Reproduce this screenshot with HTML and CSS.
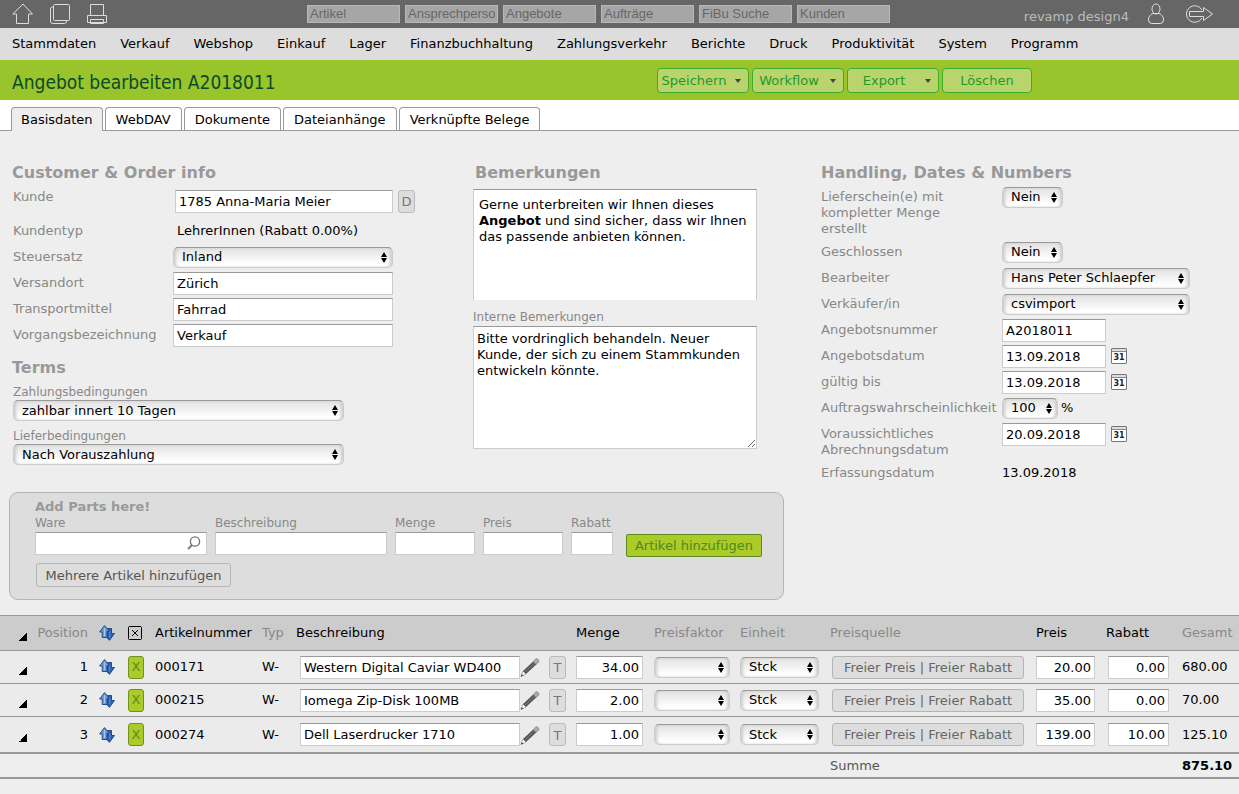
FILE: index.html
```html
<!DOCTYPE html>
<html lang="de">
<head>
<meta charset="utf-8">
<title>Angebot bearbeiten A2018011</title>
<link rel="stylesheet" href="styles.css">
</head>
<body>
<svg class="sprite" aria-hidden="true">
  <symbol id="move" viewBox="0 0 16 16">
    <path d="M8.500 3.500H12.500V8.500H15.500L10.500 15.300 5.500 10.500H8.500Z" fill="#2f62b5" stroke="#173f85" stroke-width=".9"/>
    <path d="M5.500 .6 10.500 6.500H8V12.500H3.200V7H.6Z" fill="#6b9cd2" stroke="#173f85" stroke-width=".9"/>
    <path d="M5.500 3V11" stroke="#a5c8ec" stroke-width="1"/>
    <path d="M10.800 6V12.500" stroke="#5b8bd2" stroke-width="1"/>
  </symbol>
  <symbol id="pencil" viewBox="0 0 20 20">
    <path d="M1 19.500 3 14 6 17Z" fill="#fff" stroke="#999" stroke-width=".8"/>
    <path d="M1 19.500 1.800 17.200 3.200 18.600Z" fill="#222"/>
    <path d="M3 14 13.200 4.400 16.200 7.400 6 17Z" fill="#555"/>
    <path d="M4.800 15.200 14.500 6" stroke="#888" stroke-width=".8"/>
    <path d="M13.200 4.400 15.600 2Q17 1.300 18.200 2.500T18.600 5.200L16.200 7.400Z" fill="#aaa" stroke="#777" stroke-width=".6"/>
  </symbol>
</svg>

<header class="topbar">
  <div class="tools">
    <a href="#" aria-label="Startseite"><svg width="22" height="22" viewBox="0 0 22 22"><path d="M11 1 20.500 11H16.500V20.500H4.500V11H.8Z"/></svg></a>
    <a href="#" aria-label="Kopieren"><svg width="22" height="22" viewBox="0 0 22 22"><rect x="4.500" y="1.500" width="16" height="16" rx="1"/><path d="M4 4H3.500Q1.500 4 1.500 6V18Q1.500 20.500 4 20.500H15.500Q17.500 20.500 17.500 18"/></svg></a>
    <a href="#" aria-label="Drucken"><svg width="22" height="22" viewBox="0 0 22 22"><path d="M4.500 12V1.500H17.500V12M1.500 12.500H20.500V19.500H1.500ZM4.500 19V16.500H17.500V20.500H4.500Z"/></svg></a>
  </div>
  <form class="quick">
    <input type="text" aria-label="Artikel" placeholder="Artikel">
    <input type="text" aria-label="Ansprechperson" placeholder="Ansprechperson">
    <input type="text" aria-label="Angebote" placeholder="Angebote">
    <input type="text" aria-label="Aufträge" placeholder="Aufträge">
    <input type="text" aria-label="FiBu Suche" placeholder="FiBu Suche">
    <input type="text" aria-label="Kunden" placeholder="Kunden">
  </form>
  <div class="account">
    <span class="account-name">revamp design4</span>
    <a href="#" aria-label="Benutzer"><svg width="20" height="22" viewBox="0 0 20 22"><ellipse cx="10" cy="6" rx="4" ry="5"/><path d="M7 10.500H13Q17.500 12 17.500 17 17.500 20.500 14 20.500H6Q2.500 20.500 2.500 17 2.500 12 7 10.500Z"/></svg></a>
    <a href="#" aria-label="Abmelden"><svg width="32" height="20" viewBox="0 0 32 20"><path d="M19 6A8.300 8.300 0 1 0 19 14M6.500 7.500H20.500V3.500L29.500 10 20.500 16.500V12.500H6.500Z"/></svg></a>
  </div>
</header>

<nav class="menu">
  <a href="#">Stammdaten</a><a href="#">Verkauf</a><a href="#">Webshop</a><a href="#">Einkauf</a><a href="#">Lager</a><a href="#">Finanzbuchhaltung</a><a href="#">Zahlungsverkehr</a><a href="#">Berichte</a><a href="#">Druck</a><a href="#">Produktivität</a><a href="#">System</a><a href="#">Programm</a>
</nav>

<div class="titlebar">
  <h1>Angebot bearbeiten A2018011</h1>
  <div class="actions">
    <button type="button" class="action"><span>Speichern</span><i class="caret"></i></button>
    <button type="button" class="action"><span>Workflow</span><i class="caret"></i></button>
    <button type="button" class="action"><span>Export</span><i class="caret"></i></button>
    <button type="button" class="action action-plain"><span>Löschen</span></button>
  </div>
</div>

<nav class="tabs">
  <a href="#" class="tab tab-active" aria-current="page">Basisdaten</a>
  <a href="#" class="tab">WebDAV</a>
  <a href="#" class="tab">Dokumente</a>
  <a href="#" class="tab">Dateianhänge</a>
  <a href="#" class="tab">Verknüpfte Belege</a>
</nav>

<main>
  <div class="columns">
    <section class="customer">
      <h2>Customer &amp; Order info</h2>
      <div class="row"><label for="kunde">Kunde</label><div class="field field-lookup"><input id="kunde" type="text" value="1785 Anna-Maria Meier"><button type="button" class="mini">D</button></div></div>
      <div class="row"><span class="label">Kundentyp</span><div class="field field-text">LehrerInnen (Rabatt 0.00%)</div></div>
      <div class="row"><label for="steuer">Steuersatz</label><div class="field"><span class="select w-wide"><select id="steuer"><option>Inland</option></select></span></div></div>
      <div class="row"><label for="ort">Versandort</label><div class="field"><input id="ort" class="w-wide" type="text" value="Zürich"></div></div>
      <div class="row"><label for="transport">Transportmittel</label><div class="field"><input id="transport" class="w-wide" type="text" value="Fahrrad"></div></div>
      <div class="row"><label for="vorgang">Vorgangsbezeichnung</label><div class="field"><input id="vorgang" class="w-wide" type="text" value="Verkauf"></div></div>
      <h2 class="terms-title">Terms</h2>
      <div class="stack"><label for="zahlung">Zahlungsbedingungen</label><span class="select"><select id="zahlung"><option>zahlbar innert 10 Tagen</option></select></span></div>
      <div class="stack"><label for="liefer">Lieferbedingungen</label><span class="select"><select id="liefer"><option>Nach Vorauszahlung</option></select></span></div>
    </section>

    <section class="notes">
      <h2 id="bem">Bemerkungen</h2>
      <div class="editor" contenteditable="true" role="textbox" aria-multiline="true" aria-labelledby="bem">Gerne unterbreiten wir Ihnen dieses<br><b>Angebot</b> und sind sicher, dass wir Ihnen<br>das passende anbieten können.</div>
      <label for="intern">Interne Bemerkungen</label>
      <textarea id="intern">Bitte vordringlich behandeln. Neuer
Kunde, der sich zu einem Stammkunden
entwickeln könnte.</textarea>
    </section>

    <section class="handling">
      <h2>Handling, Dates &amp; Numbers</h2>
      <div class="row"><label for="ls">Lieferschein(e) mit<br>kompletter Menge<br>erstellt</label><div class="field"><span class="select w-short"><select id="ls"><option>Nein</option></select></span></div></div>
      <div class="row"><label for="zu">Geschlossen</label><div class="field"><span class="select w-short"><select id="zu"><option>Nein</option></select></span></div></div>
      <div class="row"><label for="bearb">Bearbeiter</label><div class="field"><span class="select w-person"><select id="bearb"><option>Hans Peter Schlaepfer</option></select></span></div></div>
      <div class="row"><label for="verk">Verkäufer/in</label><div class="field"><span class="select w-person"><select id="verk"><option>csvimport</option></select></span></div></div>
      <div class="row"><label for="nr">Angebotsnummer</label><div class="field"><input id="nr" class="w-date" type="text" value="A2018011"></div></div>
      <div class="row"><label for="dat">Angebotsdatum</label><div class="field"><input id="dat" class="w-date" type="text" value="13.09.2018"><button type="button" class="calendar">31</button></div></div>
      <div class="row"><label for="bis">gültig bis</label><div class="field"><input id="bis" class="w-date" type="text" value="13.09.2018"><button type="button" class="calendar">31</button></div></div>
      <div class="row"><label for="wahr">Auftragswahrscheinlichkeit</label><div class="field"><span class="select w-percent"><select id="wahr"><option>100</option></select></span><span class="unit">%</span></div></div>
      <div class="row"><label for="abr">Voraussichtliches Abrechnungsdatum</label><div class="field"><input id="abr" class="w-date" type="text" value="20.09.2018"><button type="button" class="calendar">31</button></div></div>
      <div class="row"><span class="label">Erfassungsdatum</span><div class="field">13.09.2018</div></div>
    </section>
  </div>

  <form class="parts">
    <h3>Add Parts here!</h3>
    <div class="parts-fields">
      <div class="part part-long"><label for="p1">Ware</label><div class="search"><input id="p1" type="text"><svg class="lens" width="14" height="14" viewBox="0 0 14 14"><circle cx="8" cy="5.500" r="4.600" fill="none" stroke="#777" stroke-width="1.400"/><path d="M5 9 1 13" stroke="#777" stroke-width="1.800"/></svg></div></div>
      <div class="part part-long"><label for="p2">Beschreibung</label><input id="p2" type="text"></div>
      <div class="part part-mid"><label for="p3">Menge</label><input id="p3" type="text"></div>
      <div class="part part-mid"><label for="p4">Preis</label><input id="p4" type="text"></div>
      <div class="part part-small"><label for="p5">Rabatt</label><input id="p5" type="text"></div>
      <button type="button" class="add">Artikel hinzufügen</button>
    </div>
    <button type="button" class="more">Mehrere Artikel hinzufügen</button>
  </form>

  <table class="items">
    <colgroup><col class="c-flag"><col class="c-pos"><col class="c-move"><col class="c-del"><col class="c-num"><col class="c-type"><col><col class="c-qty"><col class="c-factor"><col class="c-unit"><col class="c-source"><col class="c-price"><col class="c-disc"><col class="c-total"></colgroup>
    <thead>
      <tr><th><i class="corner"></i></th><th class="soft right">Position</th><th class="center"><svg class="move" width="16" height="16"><use href="#move"/></svg></th><th class="del"><svg class="xbox" width="14" height="14" viewBox="0 0 14 14"><rect x=".5" y=".5" width="13" height="13" rx="1" fill="none" stroke="#000"/><path d="M4 4 10 10M10 4 4 10" stroke="#000"/></svg></th><th>Artikelnummer</th><th class="soft">Typ</th><th>Beschreibung</th><th>Menge</th><th class="soft">Preisfaktor</th><th class="soft">Einheit</th><th class="soft">Preisquelle</th><th>Preis</th><th>Rabatt</th><th class="soft">Gesamt</th></tr>
    </thead>
    <tbody>
      <tr><td><i class="corner"></i></td><td class="right">1</td><td class="center"><svg class="move" width="16" height="16"><use href="#move"/></svg></td><td class="del"><button type="button" class="remove">X</button></td><td>000171</td><td>W-</td><td><div class="desc"><input type="text" aria-label="Beschreibung 1" value="Western Digital Caviar WD400"><svg width="20" height="20"><use href="#pencil"/></svg><button type="button" class="mini">T</button></div></td><td><input class="num w-qty" type="text" aria-label="Menge 1" value="34.00"></td><td><span class="select w-factor"><select aria-label="Preisfaktor 1"><option></option></select></span></td><td><span class="select w-unit"><select aria-label="Einheit 1"><option>Stck</option></select></span></td><td><button type="button" class="source">Freier Preis | Freier Rabatt</button></td><td><input class="num w-price" type="text" aria-label="Preis 1" value="20.00"></td><td class="disc"><input class="num w-disc" type="text" aria-label="Rabatt 1" value="0.00"></td><td>680.00</td></tr>
      <tr><td><i class="corner"></i></td><td class="right">2</td><td class="center"><svg class="move" width="16" height="16"><use href="#move"/></svg></td><td class="del"><button type="button" class="remove">X</button></td><td>000215</td><td>W-</td><td><div class="desc"><input type="text" aria-label="Beschreibung 2" value="Iomega Zip-Disk 100MB"><svg width="20" height="20"><use href="#pencil"/></svg><button type="button" class="mini">T</button></div></td><td><input class="num w-qty" type="text" aria-label="Menge 2" value="2.00"></td><td><span class="select w-factor"><select aria-label="Preisfaktor 2"><option></option></select></span></td><td><span class="select w-unit"><select aria-label="Einheit 2"><option>Stck</option></select></span></td><td><button type="button" class="source">Freier Preis | Freier Rabatt</button></td><td><input class="num w-price" type="text" aria-label="Preis 2" value="35.00"></td><td class="disc"><input class="num w-disc" type="text" aria-label="Rabatt 2" value="0.00"></td><td>70.00</td></tr>
      <tr><td><i class="corner"></i></td><td class="right">3</td><td class="center"><svg class="move" width="16" height="16"><use href="#move"/></svg></td><td class="del"><button type="button" class="remove">X</button></td><td>000274</td><td>W-</td><td><div class="desc"><input type="text" aria-label="Beschreibung 3" value="Dell Laserdrucker 1710"><svg width="20" height="20"><use href="#pencil"/></svg><button type="button" class="mini">T</button></div></td><td><input class="num w-qty" type="text" aria-label="Menge 3" value="1.00"></td><td><span class="select w-factor"><select aria-label="Preisfaktor 3"><option></option></select></span></td><td><span class="select w-unit"><select aria-label="Einheit 3"><option>Stck</option></select></span></td><td><button type="button" class="source">Freier Preis | Freier Rabatt</button></td><td><input class="num w-price" type="text" aria-label="Preis 3" value="139.00"></td><td class="disc"><input class="num w-disc" type="text" aria-label="Rabatt 3" value="10.00"></td><td>125.10</td></tr>
    </tbody>
    <tfoot>
      <tr><td colspan="10"></td><td class="sum-label">Summe</td><td colspan="2"></td><td class="sum">875.10</td></tr>
    </tfoot>
  </table>
</main>
</body>
</html>
```
FILE: styles.css
```css
* { box-sizing: border-box; }
body {
  margin: 0;
  background: #eee;
  color: #000;
  font: 13px/16px "DejaVu Sans", Verdana, sans-serif;
}
a { color: inherit; text-decoration: none; }
button, input, select, textarea { font: inherit; color: inherit; margin: 0; }
svg { display: block; }
.sprite { position: absolute; width: 0; height: 0; }

/* Top bar */
.topbar {
  display: grid;
  grid-template-columns: 295px auto 1fr;
  align-items: center;
  height: 28px;
  padding: 0 24px 0 12px;
  background: #666;
}
.topbar svg { fill: none; stroke: #ddd; stroke-width: 1; }
.tools { display: flex; gap: 15px; }
.quick { display: flex; gap: 5px; margin-bottom: 1px; }
.quick input {
  width: 93px;
  height: 18px;
  padding: 0 2px;
  border: 1px solid #b8b8b8;
  background: #a6a6a6;
  font: 13px/16px "Liberation Sans", Arial, sans-serif;
}
.quick input::placeholder { color: #666; opacity: 1; }
.account { display: flex; justify-content: flex-end; align-items: center; gap: 17px; }
.account-name { padding-top: 5px; color: #bbb; }

/* Main menu */
.menu {
  display: flex;
  gap: 24px;
  padding: 8px 12px;
  background: #ddd;
  white-space: nowrap;
}

/* Title and actions */
.titlebar {
  display: grid;
  grid-template-columns: 645px auto;
  align-items: center;
  justify-content: start;
  height: 40px;
  padding: 0 12px;
  background: #9ac42b;
}
h1 {
  margin: 0;
  padding-top: 4px;
  color: #0a4a2a;
  font: 19px/24px "DejaVu Sans Condensed", "DejaVu Sans", Tahoma, sans-serif;
}
.actions { display: flex; gap: 3px; }
.action {
  display: flex;
  align-items: center;
  width: 92px;
  height: 25px;
  padding: 2px 7px 0 1px;
  border: 1px solid #3aad2c;
  border-radius: 4px;
  background: #b9d46d;
  color: #1e9a26;
}
.action-plain { width: 90px; padding: 2px 0 0; }
.action span { flex: 1; text-align: center; }
.caret {
  margin-left: 6px;
  border: 3px solid transparent;
  border-top: 4px solid #444;
  border-bottom: 0;
}

/* Tabs */
.tabs {
  display: flex;
  align-items: flex-end;
  gap: 2px;
  height: 31px;
  padding-left: 11px;
  border-bottom: 1px solid #999;
  background: #fff;
}
.tab {
  height: 23px;
  padding: 4px 10px 0;
  border: 1px solid #999;
  border-bottom: 0;
  border-radius: 4px 4px 0 0;
  background: #fff;
  white-space: nowrap;
}
.tab-active { height: 24px; margin-bottom: -1px; padding: 4px 9px 0; background: #eee; }

/* Form controls */
input, textarea, .editor {
  border: 1px solid #ccc;
  border-top-color: #999;
  border-radius: 0;
  background: #fff;
}
input { height: 23px; padding: 0 3px; }
.select { position: relative; display: block; height: 21px; }
.select select {
  display: block;
  width: 100%;
  height: 21px;
  padding: 0 18px 0 8px;
  border: 1px solid #ccc;
  border-top-color: #999;
  border-radius: 5px;
  background: linear-gradient(#e2e2e2, #fff 85%);
  box-shadow: inset 3px 0 3px -1px #ccc, inset -3px 0 3px -1px #ccc;
  appearance: none;
}
.select::before, .select::after {
  content: "";
  position: absolute;
  right: 6px;
  border: 3px solid transparent;
  pointer-events: none;
}
.select::before { top: 5px; border-top: 0; border-bottom: 5px solid #000; }
.select::after { top: 11px; border-bottom: 0; border-top: 5px solid #000; }
.mini {
  width: 17px;
  height: 23px;
  padding: 2px 0 0;
  border: 1px solid #bbb;
  border-radius: 3px;
  background: #ddd;
  color: #777;
}

/* Form columns */
.columns {
  display: grid;
  grid-template-columns: 461px 348px minmax(370px, 1fr);
  padding: 29px 12px 0;
}
h2 { margin: 0; padding-top: 2px; color: #999; font: bold 16px/22px "DejaVu Sans", Verdana, sans-serif; }
label, .label { color: #888; }
.row { display: grid; grid-template-columns: 161px 1fr; align-items: start; }
.row label, .row .label { padding: 5px 0 2px 1px; }
.field { display: flex; align-items: center; min-height: 26px; }
.field-lookup { min-height: 34px; padding-left: 2px; gap: 5px; }
.field-lookup input { width: 218px; }
.field-text { padding-left: 4px; }
.w-wide { width: 220px; }
.terms-title { margin-top: 7px; margin-bottom: 5px; }
.stack { display: grid; width: 331px; margin: 0 0 7px 1px; }
.stack label, .notes label, .part label { font-size: 12px; }

.notes h2 { padding: 2px 0 5px 2px; }
.editor { width: 284px; height: 112px; padding: 7px 5px; border-bottom-color: #eee; white-space: nowrap; }
.notes label { display: block; margin: 8px 0 1px; }
textarea { display: block; width: 284px; height: 123px; padding: 4px 3px; white-space: pre; overflow: hidden; }

.handling .row { grid-template-columns: 181px 1fr; }
.handling .row label, .handling .row .label { padding-left: 0; }
.w-short { width: 61px; }
.w-person { width: 188px; }
.w-percent { width: 56px; }
.w-date { width: 104px; }
.unit { padding-left: 3px; }
.calendar {
  width: 16px;
  height: 16px;
  margin-left: 5px;
  padding: 4px 0 0;
  border: 1px solid #777;
  border-radius: 1px;
  background: linear-gradient(#ddd 2px, #888 2px, #888 3px, #fff 3px);
  color: #222;
  font-size: 8px;
  font-weight: bold;
  line-height: 8px;
}

/* Add parts panel */
.parts {
  width: 775px;
  height: 108px;
  margin: 6px 0 15px 9px;
  padding: 6px 16px 6px 25px;
  border: 1px solid #b5b5b5;
  border-radius: 9px;
  background: #ddd;
}
h3 { margin: 0; color: #999; font: bold 13px/16px "DejaVu Sans", Verdana, sans-serif; }
.parts-fields { display: flex; align-items: flex-end; gap: 8px; }
.part { display: grid; gap: 1px; }
.part input { width: 100%; }
.part-long { width: 172px; }
.part-mid { width: 80px; }
.part-small { width: 42px; }
.search { position: relative; }
.lens { position: absolute; right: 6px; top: 4px; }
.add {
  width: 136px;
  height: 23px;
  margin: 0 0 -2px 5px;
  padding: 0;
  border: 1px solid #5c8a1e;
  border-radius: 2px;
  background: #adcb28;
  color: #4c8a20;
  white-space: nowrap;
}
.more, .source {
  height: 24px;
  padding: 1px 8px 0;
  border: 1px solid #b5b5b5;
  border-radius: 3px;
  background: #ddd;
  color: #666;
  white-space: nowrap;
}
.more { width: 195px; margin: 8px 0 0 1px; color: #555; }

/* Positions table */
.items { width: 100%; table-layout: fixed; border-collapse: separate; border-spacing: 0; }
.items th, .items td { height: 33px; padding: 0; border-bottom: 1px solid #999; text-align: left; white-space: nowrap; }
.items th { height: 36px; border-top: 1px solid #999; background: #ccc; font-weight: normal; }
.items tbody td { background: #ebebeb; }
.items tbody tr:last-child td { height: 37px; border-bottom: 2px solid #999; }
.items tfoot td { height: 25px; border-bottom: 2px solid #999; }
.items .right { text-align: right; }
.items .soft { color: #888; }
.items .del { padding-left: 3px; }
.items .disc { padding-left: 2px; }
.items .sum-label { color: #555; }
.items .sum { font-weight: bold; }
.c-flag { width: 34px; }
.c-pos { width: 54px; }
.c-move { width: 37px; }
.c-del { width: 30px; }
.c-num { width: 107px; }
.c-type { width: 34px; }
.c-qty { width: 78px; }
.c-factor { width: 86px; }
.c-unit { width: 90px; }
.c-source { width: 206px; }
.c-price { width: 70px; }
.c-disc { width: 76px; }
.c-total { width: 57px; }
.corner {
  display: block;
  margin: 7px 0 0 19px;
  width: 8px;
  height: 8px;
  background: linear-gradient(135deg, transparent 50%, #000 50%);
}
.move { margin: 0 auto; }
.remove {
  display: block;
  width: 16px;
  height: 23px;
  padding: 0;
  border: 1px solid #6d9420;
  border-radius: 3px;
  background: #adcb28;
  color: #5c8a1e;
}
.desc { display: flex; align-items: center; padding: 0 10px 0 4px; }
.desc input { flex: 1; min-width: 0; }
.desc svg { flex: none; }
.desc .mini { flex: none; margin-left: 9px; }
.source { display: block; width: 192px; height: 23px; margin-left: 2px; }
.num { display: block; text-align: right; }
.w-qty { width: 67px; }
.w-factor { width: 76px; }
.w-unit { width: 79px; }
.w-price { width: 59px; }
.w-disc { width: 61px; }
```
